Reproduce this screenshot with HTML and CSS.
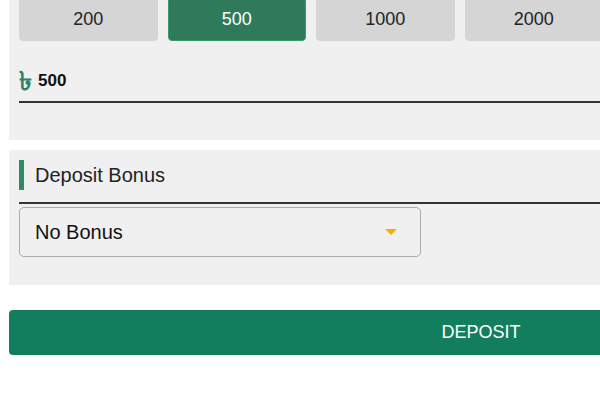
FILE: index.html
```html
<!DOCTYPE html>
<html>

<head>
    <meta charset="utf-8">
    <title>Deposit</title>
    <link rel="stylesheet" href="styles.css">
</head>

<body>
    <div class="page">
        <section class="panel amount-panel">
            <div class="presets">
                <button class="preset">200</button>
                <button class="preset active">500</button>
                <button class="preset">1000</button>
                <button class="preset">2000</button>
            </div>
            <div class="amount-field">
                <span class="currency">৳</span>
                <span class="amount">500</span>
            </div>
        </section>

        <section class="panel bonus-panel">
            <div class="panel-head">
                <div class="panel-title">Deposit Bonus</div>
            </div>
            <div class="select">
                <span>No Bonus</span>
                <span class="caret"></span>
            </div>
        </section>

        <button class="deposit">DEPOSIT</button>
    </div>
</body>

</html>
```

FILE: styles.css
```css
html, body {
overflow: hidden;
}

body {
margin: 0;
font-family: "Liberation Sans", Arial, sans-serif;
background-color: #fff;
color: #222;
}

.page {
width: 944px;
margin: -13px 0 0 9px;
}

.panel {
background: #f0f0f0;
padding: 10px;
}

.amount-panel {
padding-bottom: 37px;
}

.presets {
display: grid;
grid-template-columns: repeat(4, 138.5px);
gap: 10px;
}

.preset {
height: 44px;
border: 1px solid #d5d5d5;
border-radius: 4px;
background-color: #d5d5d5;
color: #222;
font-family: inherit;
font-size: 18px;
cursor: pointer;
}

.preset.active {
background-color: #2e7a5a;
border-color: #3a9a6c;
color: #fff;
}

.amount-field {
display: flex;
align-items: center;
gap: 5px;
height: 40px;
margin-top: 20px;
border-bottom: 2px solid #333;
}

.currency {
width: 14px;
line-height: 1;
color: #2e8060;
font-size: 26px;
font-weight: bold;
}

.amount {
font-size: 17px;
font-weight: bold;
color: #111;
}

.bonus-panel {
margin-top: 10px;
padding-bottom: 28px;
}

.panel-head {
padding-bottom: 12px;
border-bottom: 2px solid #333;
}

.panel-title {
border-left: 5px solid #2e8b62;
padding-left: 11px;
line-height: 30px;
font-size: 20px;
color: #222;
}

.select {
display: flex;
align-items: center;
justify-content: space-between;
box-sizing: border-box;
width: 402px;
height: 50px;
margin-top: 3px;
padding: 0 23px 0 15px;
border: 1px solid #aaa;
border-radius: 5px;
font-size: 20px;
color: #111;
}

.caret {
width: 0;
height: 0;
border-left: 6px solid transparent;
border-right: 6px solid transparent;
border-top: 6px solid #f5b000;
}

.deposit {
display: block;
width: 100%;
height: 45px;
margin-top: 25px;
border: none;
border-radius: 4px;
background-color: #137e5d;
color: #fff;
font-family: inherit;
font-size: 18px;
cursor: pointer;
}
```
